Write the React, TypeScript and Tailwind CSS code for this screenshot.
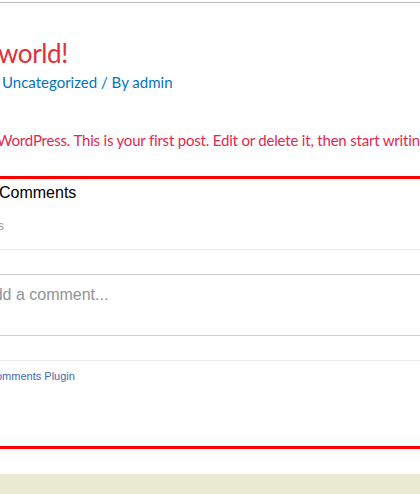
import React from "react";

export default function App() {
  return (
    <div className="w-[420px] h-[494px] overflow-hidden bg-white">
      <div className="h-[2px]" />
      <div className="h-px bg-[#bbbbbb]" />
      <div className="h-[36px]" />
      {/* title top 39 */}
      <div
        className="h-[28px] leading-[28px] text-[26px] tracking-[-0.4px] text-[#e2303a] whitespace-nowrap ml-[-2px]"
        style={{ fontFamily: 'Lato, sans-serif' }}
      >
        world!
      </div>
      <div className="h-[5px]" />
      {/* meta top 72 */}
      <div
        className="h-[20px] leading-[20px] text-[15px] text-[#0274be] whitespace-nowrap ml-[2px]"
        style={{ fontFamily: 'Lato, sans-serif' }}
      >
        Uncategorized / By admin
      </div>
      <div className="h-[38px]" />
      {/* body top 130 */}
      <div
        className="h-[20px] leading-[20px] text-[15px] tracking-[-0.19px] text-[#e2284f] whitespace-nowrap ml-[-3px]"
        style={{ fontFamily: 'Lato, sans-serif' }}
      >
        WordPress. This is your first post. Edit or delete it, then start writing!
      </div>
      <div className="h-[26px]" />
      {/* red border top 176 */}
      <div className="h-[3px] bg-[#ff0000]" />
      <div className="h-[5px]" />
      <div
        className="h-[18px] leading-[18px] text-[16px] text-black whitespace-nowrap ml-[-1px]"
        style={{ fontFamily: '"Liberation Sans", Arial, sans-serif' }}
      >
        Comments
      </div>
      <div className="h-[17px]" />
      {/* 0 comments top 219 */}
      <div
        className="h-[14px] leading-[14px] text-[12px] text-[#90949c] whitespace-nowrap ml-[-2px]"
        style={{ fontFamily: '"Liberation Sans", Arial, sans-serif' }}
      >
        s
      </div>
      <div className="h-[16px]" />
      {/* line 249 */}
      <div className="h-px bg-[#e9ebee]" />
      <div className="h-[24px]" />
      {/* textarea 274-335 */}
      <div className="h-[62px] border-y border-[#ccd0d5] pt-[11px]">
        <div
          className="h-[18px] leading-[18px] text-[16px] text-[#90949c] whitespace-nowrap ml-[-17px]"
          style={{ fontFamily: '"Liberation Sans", Arial, sans-serif' }}
        >
          Add a comment...
        </div>
      </div>
      <div className="h-[24px]" />
      {/* line 360 */}
      <div className="h-px bg-[#e9ebee]" />
      <div className="h-[9px]" />
      {/* plugin top 370 */}
      <div
        className="h-[13px] leading-[13px] text-[11px] text-[#4267b2] whitespace-nowrap ml-[-4px]"
        style={{ fontFamily: '"Liberation Sans", Arial, sans-serif' }}
      >
        omments Plugin
      </div>
      <div className="h-[63px]" />
      {/* red border 446 */}
      <div className="h-[3px] bg-[#ff0000]" />
      <div className="h-[25px]" />
      <div className="h-[20px] bg-[#eae9d1]" />
    </div>
  );
}
